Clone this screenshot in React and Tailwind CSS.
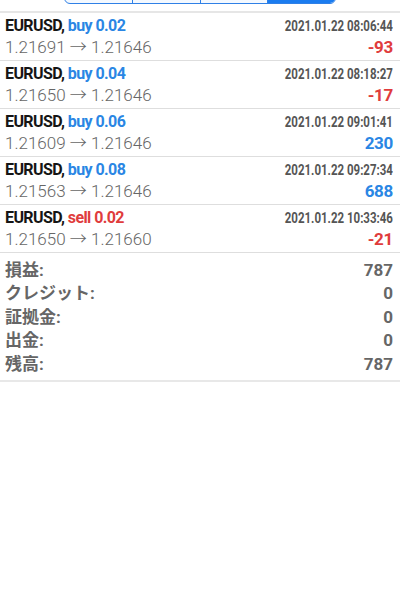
import React from "react";

const trades = [
  { side: "buy", lot: "0.02", time: "2021.01.22 08:06:44", from: "1.21691", to: "1.21646", pl: "-93" },
  { side: "buy", lot: "0.04", time: "2021.01.22 08:18:27", from: "1.21650", to: "1.21646", pl: "-17" },
  { side: "buy", lot: "0.06", time: "2021.01.22 09:01:41", from: "1.21609", to: "1.21646", pl: "230" },
  { side: "buy", lot: "0.08", time: "2021.01.22 09:27:34", from: "1.21563", to: "1.21646", pl: "688" },
  { side: "sell", lot: "0.02", time: "2021.01.22 10:33:46", from: "1.21650", to: "1.21660", pl: "-21" },
];

const summary = [
  ["損益:", "787"],
  ["クレジット:", "0"],
  ["証拠金:", "0"],
  ["出金:", "0"],
  ["残高:", "787"],
];

export default function App() {
  return (
    <div
      className="w-[400px] h-[600px] bg-white overflow-hidden"
      style={{ fontFamily: 'Roboto, "Noto Sans CJK JP", sans-serif' }}
    >
      <div className="h-[11px] flex justify-center items-end overflow-hidden">
        <div className="flex w-[272px] h-[30px] mb-[7px] border border-[#2f80e6] rounded-[6px] overflow-hidden bg-[#f4f9ff]">
          <div className="flex-1 border-r border-[#2f80e6]" />
          <div className="flex-1 border-r border-[#2f80e6]" />
          <div className="flex-1 border-r border-[#2f80e6]" />
          <div className="flex-1 bg-[#1a7cf0]" />
        </div>
      </div>
      <div className="h-[2px] bg-[#e6e6e6]" />
      {trades.map((t, i) => (
        <div key={i} className="h-[48px] border-b border-[#dedede] pl-[5px] pr-[7px] pt-[2px]">
          <div className="flex justify-between items-center h-[22px]">
            <div className="text-[16px] font-bold tracking-[-0.6px] text-[#151515]">
              EURUSD,{" "}
              <span className={t.side === "buy" ? "text-[#2a86e4]" : "text-[#e03c3c]"}>
                {t.side} {t.lot}
              </span>
            </div>
            <div className="inline-block whitespace-nowrap text-[14px] font-bold text-[#555] scale-x-[0.82] origin-right">
              {t.time}
            </div>
          </div>
          <div className="flex justify-between items-center h-[22px]">
            <div className="text-[17px] font-light text-[#666]">
              {t.from} → {t.to}
            </div>
            <div
              className={
                "text-[17px] font-bold tracking-[-0.3px] " +
                (t.pl.startsWith("-") ? "text-[#e03c3c]" : "text-[#2a86e4]")
              }
            >
              {t.pl}
            </div>
          </div>
        </div>
      ))}
      <div className="pl-[5px] pr-[7px] pt-[6px] pb-[4px] border-b-2 border-[#e8e8e8]">
        {summary.map(([k, v], i) => (
          <div key={i} className="flex justify-between items-center h-[23.4px] text-[17px] font-bold text-[#666]">
            <span>{k}</span>
            <span>{v}</span>
          </div>
        ))}
      </div>
    </div>
  );
}
